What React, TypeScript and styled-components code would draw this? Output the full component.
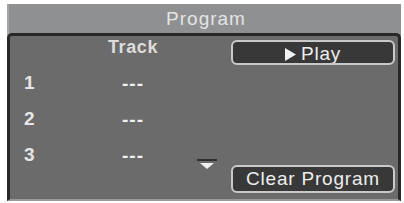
import React from "react";
import styled, { createGlobalStyle } from "styled-components";

const GlobalStyle = createGlobalStyle`
  html, body {
    margin: 0;
    padding: 0;
    background: #ffffff;
  }
  body {
    font-family: "Liberation Sans", Arial, sans-serif;
  }
`;

const Frame = styled.div`
  box-sizing: border-box;
  margin: 4px 0 0 7px;
  width: 394px;
  height: 197px;
  background: #8e9091;
  border-left: 2px solid #a3a5a6;
  display: flex;
  flex-direction: column;
`;

const Header = styled.div`
  height: 29px;
  display: flex;
  align-items: center;
  justify-content: center;
  color: #e4e4e4;
  font-size: 19px;
  letter-spacing: 1px;
  padding-left: 2px;
`;

const Panel = styled.div`
  box-sizing: border-box;
  flex: 1;
  margin-left: -2px;
  background: #6b6b6b;
  border: 3px solid #282828;
  border-bottom: 2px solid #9a9a9a;
  border-radius: 5px 5px 0 0;
  display: flex;
`;

const ListCol = styled.div`
  position: relative;
  width: 219px;
  padding-left: 14px;
  box-sizing: border-box;
`;

const Row = styled.div<{ $h: number }>`
  display: grid;
  grid-template-columns: 50px 118px;
  align-items: center;
  height: ${(p) => p.$h}px;
  color: #e8e8e8;
`;

const TrackTitle = styled.div`
  grid-column: 2;
  text-align: center;
  font-size: 18px;
  font-weight: bold;
  letter-spacing: 0.6px;
  color: #dcdcdc;
`;

const Rows = styled.div`
  padding-top: 7px;
`;

const Num = styled.div`
  font-size: 19px;
  font-weight: bold;
  color: #e6e6e6;
`;

const Dashes = styled.div`
  text-align: center;
  font-size: 19px;
  font-weight: bold;
  letter-spacing: 1px;
  color: #f2f2f2;
  padding-top: 2px;
`;

const ScrollDown = styled.div`
  position: absolute;
  left: 187px;
  top: 123px;
  width: 20px;
  display: flex;
  flex-direction: column;
  align-items: center;
  gap: 2px;
  &::before {
    content: "";
    width: 20px;
    height: 2px;
    background: #2e2e2e;
  }
  &::after {
    content: "";
    width: 0;
    height: 0;
    border-left: 7px solid transparent;
    border-right: 7px solid transparent;
    border-top: 6px solid #f0f0f0;
  }
`;

const ButtonCol = styled.div`
  flex: 1;
  padding: 4px 3px 6px 2px;
  display: flex;
  flex-direction: column;
  justify-content: space-between;
`;

const PanelButton = styled.button<{ $h: number; $drop?: number }>`
  box-sizing: border-box;
  height: ${(p) => p.$h}px;
  width: 100%;
  background: #383838;
  border: 2px solid #c9c9c9;
  border-radius: 6px;
  color: #eeeeee;
  font-family: "Liberation Sans", Arial, sans-serif;
  font-size: 19px;
  letter-spacing: 0.8px;
  display: flex;
  align-items: center;
  justify-content: center;
  gap: 5px;
  padding: ${(p) => p.$drop ?? 0}px 0 0;
  overflow: hidden;
  cursor: pointer;
`;

const PlayIcon = () => (
  <svg width="11" height="13" viewBox="0 0 11 13">
    <path d="M0 0 L11 6.5 L0 13 Z" fill="#f2f2f2" />
  </svg>
);

const tracks = ["1", "2", "3"];

export default function App() {
  return (
    <>
      <GlobalStyle />
      <Frame>
        <Header>Program</Header>
        <Panel>
          <ListCol>
            <Row $h={22}>
              <TrackTitle>Track</TrackTitle>
            </Row>
            <Rows>
              {tracks.map((n) => (
                <Row key={n} $h={36}>
                  <Num>{n}</Num>
                  <Dashes>---</Dashes>
                </Row>
              ))}
            </Rows>
            <ScrollDown />
          </ListCol>
          <ButtonCol>
            <PanelButton $h={25} $drop={3}>
              <PlayIcon />
              Play
            </PanelButton>
            <PanelButton $h={28}>Clear Program</PanelButton>
          </ButtonCol>
        </Panel>
      </Frame>
    </>
  );
}
